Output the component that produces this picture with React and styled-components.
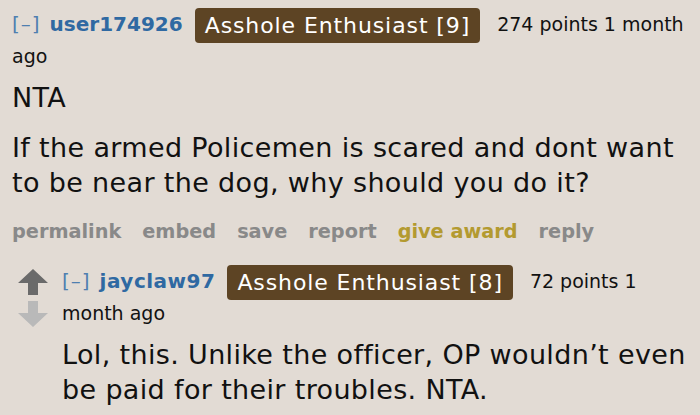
import styled, { createGlobalStyle } from 'styled-components';

const GlobalStyle = createGlobalStyle`
  html, body {
    margin: 0;
    padding: 0;
    background: #e2dbd4;
  }
  body {
    font-family: "DejaVu Sans", Verdana, sans-serif;
    color: #111;
  }
`

const Page = styled.div`
  width: 700px;
  height: 415px;
  overflow: hidden;
  box-sizing: border-box;
  padding: 9px 6px 0 12px;
`

const Tagline = styled.div`
  font-size: 19px;
  line-height: 31px;
`

const Expand = styled.span`
  color: #4f7fb0;
  font-size: 20px;
  letter-spacing: 1px;
  margin-right: 9px;
`

const Author = styled.span`
  color: #2f69a2;
  font-weight: 700;
  font-size: 20px;
  letter-spacing: ${p => p.$wide || 0}px;
  margin-right: 12px;
`

const Flair = styled.span`
  display: inline-block;
  background: #5d4424;
  color: #fff;
  font-size: 22px;
  letter-spacing: 0.9px;
  line-height: 35px;
  padding: 0 10px;
  border-radius: 4px;
  margin: -2px 17px -2px 0;
  vertical-align: middle;
`

const Points = styled.span`
  color: #111;
`

const Body = styled.div`
  font-size: 27px;
  letter-spacing: 0.35px;
  line-height: 35px;
  margin-top: 8px;
`

const Para = styled.p`
  margin: 0 0 ${p => p.$gap || 0}px 0;
  line-height: ${p => (p.$gap ? '36px' : 'inherit')};
`

const Buttons = styled.ul`
  list-style: none;
  display: flex;
  gap: 21px;
  margin: 20px 0 0 0;
  padding: 0;
  line-height: 23px;
`

const ButtonLink = styled.li`
  font-weight: 700;
  font-size: 19.3px;
  color: ${p => (p.$gold ? '#b39a30' : '#898989')};
`

const Child = styled.div`
  display: flex;
  margin-top: 23px;
`

const Votes = styled.div`
  flex: 0 0 44px;
  display: flex;
  flex-direction: column;
  gap: 6px;
  padding: 3px 0 0 6px;
`

const Entry = styled.div`
  flex: 1;
  min-width: 0;
`

const Arrow = ({ down, color }) => (
  <svg width="30" height="26" viewBox="0 0 30 26" style={{ display: 'block' }}>
    <path
      d="M15 0 L30 14 L20 14 L20 26 L10 26 L10 14 L0 14 Z"
      fill={color}
      transform={down ? 'rotate(180 15 13)' : undefined}
    />
  </svg>
)

const App = () => {
  return (
    <Page>
      <GlobalStyle />
      <Tagline>
        <Expand>[–]</Expand>
        <Author>user174926</Author>
        <Flair>Asshole Enthusiast [9]</Flair>
        <Points>274 points 1 month ago</Points>
      </Tagline>
      <Body>
        <Para $gap={14}>NTA</Para>
        <Para>If the armed Policemen is scared and dont want to be near the dog, why should you do it?</Para>
      </Body>
      <Buttons>
        <ButtonLink>permalink</ButtonLink>
        <ButtonLink>embed</ButtonLink>
        <ButtonLink>save</ButtonLink>
        <ButtonLink>report</ButtonLink>
        <ButtonLink $gold>give award</ButtonLink>
        <ButtonLink>reply</ButtonLink>
      </Buttons>
      <Child>
        <Votes>
          <Arrow color="#6a6a6a" />
          <Arrow down color="#b9b9b9" />
        </Votes>
        <Entry>
          <Tagline>
            <Expand>[–]</Expand>
            <Author $wide={0.5}>jayclaw97</Author>
            <Flair>Asshole Enthusiast [8]</Flair>
            <Points>72 points 1 month ago</Points>
          </Tagline>
          <Body>
            <Para>Lol, this. Unlike the officer, OP wouldn’t even be paid for their troubles. NTA.</Para>
          </Body>
        </Entry>
      </Child>
    </Page>
  );
};

export default App;
